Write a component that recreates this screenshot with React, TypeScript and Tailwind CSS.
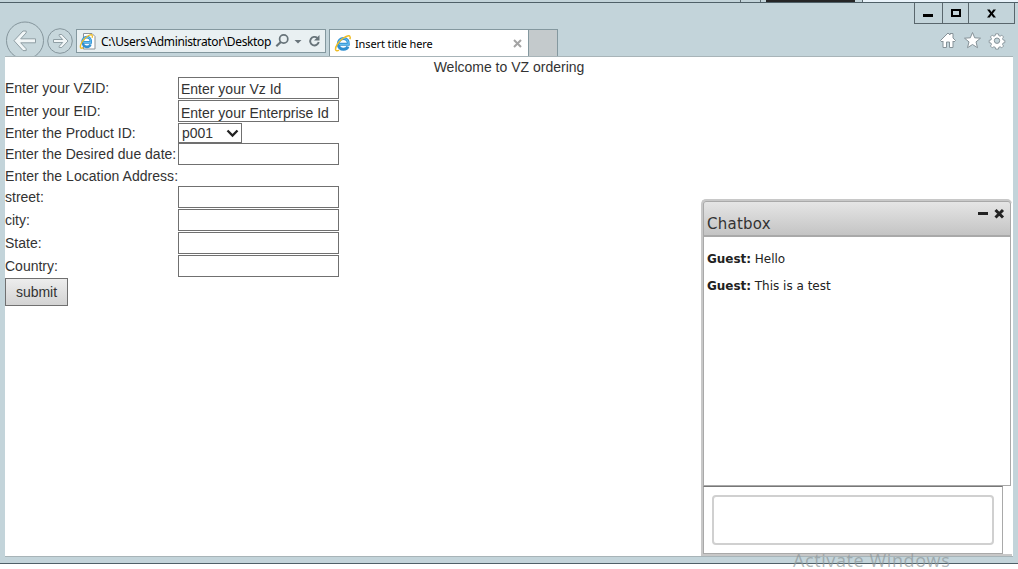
import React from "react";

function IELogo({ page = false }: { page?: boolean }) {
  return (
    <svg width="16" height="17" viewBox="0 0 16 17" className="block shrink-0 overflow-visible">
      {page && <path d="M3.5.5h8.500l3 3v12.500H3.500z" fill="#fff" stroke="#8b9296" />}
      <g transform={page ? "translate(-0.5 1) scale(.82 .9)" : "translate(-0.5 0)"}>
        <path d="M4.600 9.300h9.200C14.200 5.700 12 3.500 9 3.500S3.800 5.800 3.800 9s2.100 5.300 5.300 5.300c2.200 0 3.700-1 4.300-2.800" fill="none" stroke="#2f8fd0" strokeWidth="3" />
        <path d="M4.600 9.300h9.200C14.200 5.700 12 3.500 9 3.500S3.800 5.800 3.800 9" fill="none" stroke="#62bdf0" strokeWidth="1.200" />
        <path d="M4.500 15.200C2.800 16.200 1.200 16 1 14.500.6 11.500 4.500 6 9 3c3-2 5.800-2.800 6.500-1.500.4.700.3 1.700-.1 2.800" fill="none" stroke="#efbd25" strokeWidth="1.500" />
      </g>
    </svg>
  );
}

function Field({ label, value = "", row, pad = "" }: { label: string; value?: string; row: string; pad?: string }) {
  return (
    <div className={`flex ${row}`}>
      <label className="w-[173px] shrink-0 whitespace-nowrap leading-[22px]">{label}</label>
      <div className={`h-[22px] w-[161px] border border-[#707070] bg-white pl-[2px] leading-[22px] whitespace-nowrap ${pad}`}>{value}</div>
    </div>
  );
}

function NavButtons() {
  return (
    <svg width="76" height="35" viewBox="0 21 76 35" className="block shrink-0">
      <circle cx="25" cy="40.500" r="18.500" fill="#c7d7dc" stroke="#85959c" />
      <path d="M14 40.700l9-9.700h3.200v1.800l-5.500 6h14.800v4H20.700l5.500 6v1.800H23z" fill="#f1f6f7" stroke="#8f9ea4" />
      <circle cx="60" cy="41" r="12.300" fill="#c7d7dc" stroke="#85959c" />
      <path d="M68 41l-6.200-6.500h-2.600v1.300l3.500 3.700H53.500v3h9.200l-3.500 3.700v1.300h2.600z" fill="#f1f6f7" stroke="#8f9ea4" />
    </svg>
  );
}

export default function App() {
  return (
    <div className="relative flex h-[569px] w-[1018px] flex-col overflow-hidden bg-white font-['Liberation_Sans',sans-serif]">
      <div className="flex h-[2px] bg-[#c3d4da]">
        <div className="w-[741px] border-r border-[#59666c]" />
        <div className="w-[20px] border-r border-[#59666c]" />
        <div className="w-[5px]" />
        <div className="w-[89px] bg-[#252526]" />
        <div className="w-[8px] border-r border-[#59666c]" />
        <div className="flex-1 bg-[#e9f3fa]" />
      </div>
      <div className="h-[562px] border-y border-[#4f6068] bg-[#c3d4da]">
        <div className="flex h-[53px]">
          <div className="flex flex-1 flex-col">
            <div className="h-[18px] shrink-0" />
            <div className="flex h-[35px]">
              <NavButtons />
              <div className="mt-[8px] flex h-[24px] w-[250px] shrink-0 items-center border border-[#84989f] bg-[#e9f0f2] pl-[3px]">
                <IELogo page />
                <span className="mt-[2px] ml-[5px] w-[174px] shrink-0 text-[12px] tracking-[-0.360px] whitespace-nowrap text-black font-['Noto_Sans',sans-serif]">C:\Users\Administrator\Desktop</span>
                <svg width="50" height="20" viewBox="0 0 50 20" className="block shrink-0">
                  <circle cx="8.700" cy="8" r="4.100" fill="none" stroke="#68747a" strokeWidth="1.700" />
                  <path d="M5.800 11L1.300 15.300" stroke="#68747a" strokeWidth="2.200" />
                  <path d="M19.500 9h7l-3.500 3.500z" fill="#68747a" />
                  <path d="M42.300 6.900a4.300 4.300 0 1 0 1.400 4.100" fill="none" stroke="#68747a" strokeWidth="1.900" />
                  <path d="M44.500 4v5.500H39z" fill="#68747a" />
                </svg>
              </div>
              <div className="ml-[3px] mt-[8px] flex h-[27px] w-[200px] shrink-0 items-center border border-b-0 border-[#84989f] bg-white pl-[5px]">
                <IELogo />
                <span className="mt-[2px] ml-[4px] w-[158px] shrink-0 text-[11px] tracking-[-0.120px] whitespace-nowrap text-black font-['Noto_Sans',sans-serif]">Insert title here</span>
                <svg width="9" height="9" viewBox="0 0 9 9"><path d="M1 1l7 7M8 1L1 8" stroke="#a4a4a4" strokeWidth="2" /></svg>
              </div>
              <div className="mt-[8px] h-[27px] w-[29px] shrink-0 border border-b-0 border-l-0 border-[#84989f] bg-[#c4cacc]" />
            </div>
          </div>
          <div className="flex w-[104px] flex-col">
            <div className="flex h-[21px] w-[101px] border border-t-0 border-[#59666c]">
              <div className="flex w-[28px] items-center justify-center border-r border-[#59666c]"><div className="mt-[4px] -ml-[1px] h-[3px] w-[10px] bg-black" /></div>
              <div className="flex w-[26px] items-center justify-center border-r border-[#59666c]"><div className="h-[8px] w-[10px] border-2 border-black" /></div>
              <div className="flex flex-1 items-center justify-center"><svg width="9" height="9" viewBox="0 0 10 9"><path d="M0 0h3l2 2.700L7 0h3L6.500 4.500 10 9H7L5 6.300 3 9H0l3.500-4.500z" /></svg></div>
            </div>
            <svg width="72" height="20" viewBox="938 30 72 20" className="mt-[6px] ml-[24px] block" fill="#fff" stroke="#869298" strokeWidth="1">
              <path d="M940.500 40.500l7.500-7.500 2 2v-1.500h3V38l2.500 2.500-1.500 1.500-1-1v6.500h-3.500V42h-3v5.500H943V41l-1 1z" />
              <path d="M972.500 32.500l2.200 5.300 5.800.4-4.500 3.700 1.500 5.800-5-3.200-5 3.200 1.500-5.800-4.500-3.700 5.800-.4z" />
              <path d="M995.500 33h3l.5 2 1.500.7 1.800-1.200 2 2-1.200 1.800.6 1.500 2 .5v2.500l-2 .5-.6 1.500 1.200 1.800-2 2-1.800-1.200-1.500.6-.5 2h-3l-.5-2-1.500-.6-1.800 1.200-2-2 1.200-1.800-.6-1.500-2-.5v-2.500l2-.5.6-1.500-1.200-1.800 2-2 1.800 1.200 1.500-.7z" transform="translate(99.700 4.100) scale(.9)" />
              <circle cx="997" cy="40.700" r="2.700" fill="#c3d4da" />
            </svg>
          </div>
        </div>
        <div className="ml-[5px] h-[501px] w-[1008px] border-y border-[#a8b4b8] bg-white text-[14px] text-[#333]">
          <div className="h-[20px] text-center leading-[21px]">Welcome to VZ ordering</div>
          <div className="flex justify-between">
            <form className="w-[340px]">
              <Field label="Enter your VZID:" value="Enter your Vz Id" row="h-[23px]" />
              <Field label="Enter your EID:" value="Enter your Enterprise Id" row="h-[23px]" pad="pt-[1px]" />
              <div className="flex h-[20px]">
                <label className="w-[173px] leading-[20px]">Enter the Product ID:</label>
                <div className="flex h-[20px] w-[64px] items-center justify-between border border-[#707070] pr-[2px] pl-[3px]">
                  <span>p001</span>
                  <svg width="13" height="9" viewBox="0 0 13 9"><path d="M1.500 1.500l5 5 5-5" fill="none" stroke="#222" strokeWidth="2.300" /></svg>
                </div>
              </div>
              <Field label="Enter the Desired due date:" row="h-[22px]" />
              <div className="h-[21px] leading-[22px] tracking-[0.040px]">Enter the Location Address:</div>
              <Field label="street:" row="h-[23px]" />
              <Field label="city:" row="h-[23px]" />
              <Field label="State:" row="h-[23px]" />
              <Field label="Country:" row="h-[23px]" />
              <button type="button" className="block h-[28px] w-[63px] border border-[#707070] bg-linear-to-b from-[#ededed] to-[#d3d3d3] text-[14px]">submit</button>
            </form>
            <section className="mt-[122px] mr-[1px] h-[357px] w-[311px] rounded-t-[5px] border-2 border-r-0 border-[#c8c8c8] font-['DejaVu_Sans',sans-serif] text-[#222]">
              <header className="flex h-[36px] w-[308px] items-start justify-between rounded-t-[3px] border border-b-2 border-[#a9a9a9] bg-linear-to-b from-[#e5e5e5] to-[#c4c4c4] pr-[5px] pl-[3px]">
                <h2 className="mt-[12px] text-[15px] leading-[20px] tracking-[0.250px] text-[#333]">Chatbox</h2>
                <svg width="28" height="11" viewBox="0 0 28 11" className="mt-[6px]"><path d="M1 5.500h10" stroke="#222" strokeWidth="3" /><path d="M18.500 2l7.500 7.500M26 2l-7.500 7.500" stroke="#222" strokeWidth="3" /></svg>
              </header>
              <div className="h-[249px] w-[308px] border border-t-0 border-[#a9a9a9] pt-[14px] pl-[3px] text-[12px] leading-[17px]">
                <p><b className="tracking-[-0.050px]">Guest:</b> Hello</p>
                <p className="mt-[10px]"><b className="tracking-[-0.050px]">Guest:</b> This is a test</p>
              </div>
              <div className="h-[68px] w-[300px] border border-[#a9a9a9] border-t-[#777] p-[8px]">
                <div className="h-[50px] w-[282px] rounded-[4px] border-2 border-[#d0d0d0]" />
              </div>
            </section>
          </div>
        </div>
      </div>
      <div className="absolute top-[548px] left-[793px] text-[18px] leading-[24px] tracking-[0.600px] whitespace-nowrap text-[#8e9799]/70 font-['Open_Sans',sans-serif]">Activate Windows</div>
    </div>
  );
}
